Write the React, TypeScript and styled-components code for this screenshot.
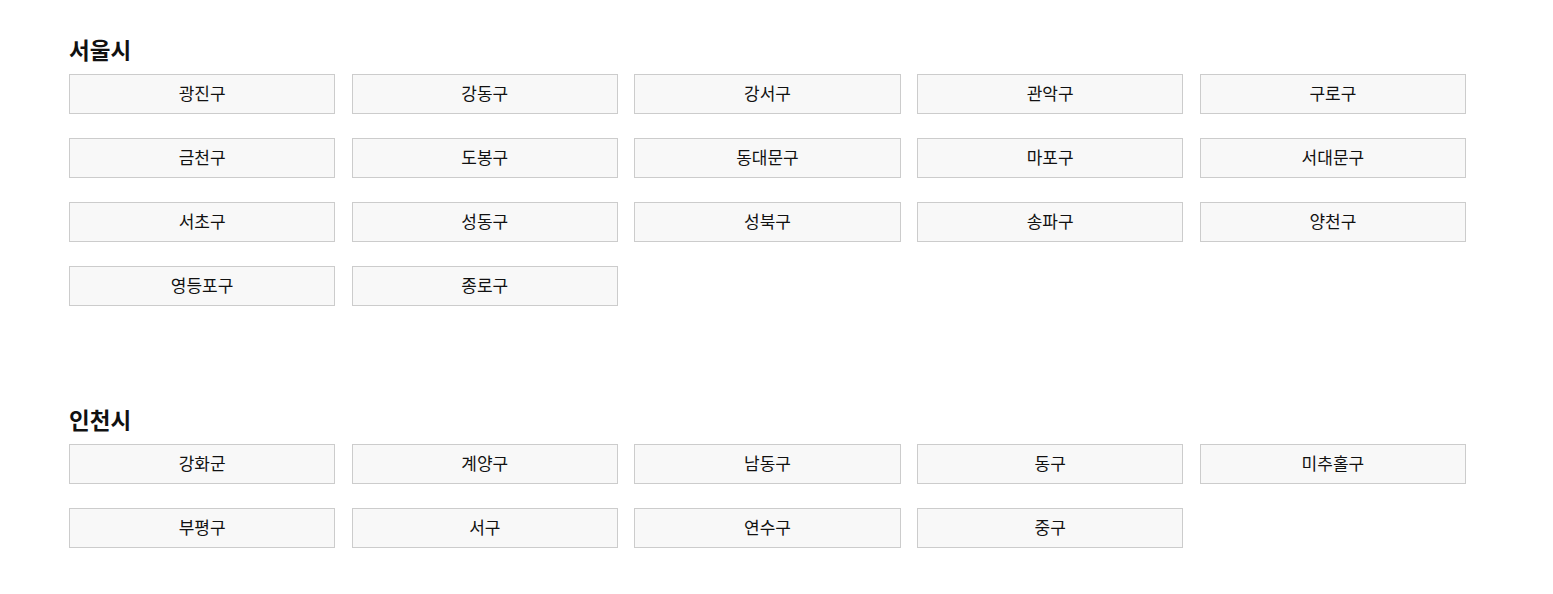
import styled, { createGlobalStyle } from 'styled-components';

const GlobalStyle = createGlobalStyle`
  body {
    margin: 0;
    background: #ffffff;
    font-family: "Noto Sans CJK KR", "Noto Sans", sans-serif;
    color: #111111;
  }
`;

const Page = styled.div`
  padding: 34px 0 0 69px;
  width: 1397px;
`;

const Section = styled.section`
  margin-bottom: 98px;

  &:last-child {
    margin-bottom: 0;
  }
`;

const CityTitle = styled.h2`
  margin: 0 0 10px;
  font-size: 22.5px;
  line-height: 30px;
  font-weight: 700;
  color: #111111;
`;

const DistrictGrid = styled.div`
  display: grid;
  grid-template-columns: repeat(5, 1fr);
  column-gap: 16.5px;
  row-gap: 24px;
`;

const DistrictButton = styled.button`
  height: 40px;
  border: 1px solid #cccccc;
  background: #f8f8f8;
  font-family: "Noto Sans CJK KR", "Noto Sans", sans-serif;
  font-size: 17px;
  color: #111111;
  padding: 0 0 3px;
  cursor: pointer;
`;

const cities = [
  {
    name: '서울시',
    districts: [
      '광진구', '강동구', '강서구', '관악구', '구로구',
      '금천구', '도봉구', '동대문구', '마포구', '서대문구',
      '서초구', '성동구', '성북구', '송파구', '양천구',
      '영등포구', '종로구',
    ],
  },
  {
    name: '인천시',
    districts: [
      '강화군', '계양구', '남동구', '동구', '미추홀구',
      '부평구', '서구', '연수구', '중구',
    ],
  },
];

export default function App() {
  return (
    <>
      <GlobalStyle />
      <Page>
        {cities.map((city) => (
          <Section key={city.name}>
            <CityTitle>{city.name}</CityTitle>
            <DistrictGrid>
              {city.districts.map((d) => (
                <DistrictButton key={d}>{d}</DistrictButton>
              ))}
            </DistrictGrid>
          </Section>
        ))}
      </Page>
    </>
  );
}
